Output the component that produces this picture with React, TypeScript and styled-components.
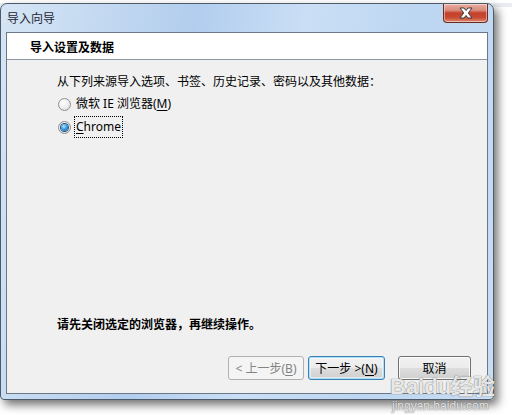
import React from "react";
import styled, { createGlobalStyle } from "styled-components";

const Global = createGlobalStyle`
  html, body { margin: 0; padding: 0; background: #ffffff; }
  body { width: 512px; height: 415px; overflow: hidden; position: relative;
    font-family: "Noto Sans", "Noto Sans CJK SC", sans-serif; }
  #root { width: 512px; height: 415px; }
`;

const Page = styled.div`
  width: 512px;
  height: 415px;
  position: relative;
  background: linear-gradient(#e9edf1 0, #e9edf1 4px, #ffffff 4px);
`;

const Window = styled.div`
  margin-top: 3px;
  width: 494px;
  height: 397px;
  box-sizing: border-box;
  border: 1px solid #4d5a69;
  border-radius: 7px 7px 4px 4px;
  background: linear-gradient(100deg, #d5e5f6 0%, #c2d8f0 20%, #b2cdee 35%, #cadff5 55%, #bdd6f1 75%, #c9ddf3 100%);
  box-shadow: 4px 5px 10px rgba(0, 0, 0, 0.55);
  display: flex;
  flex-direction: column;
  padding: 0 5px 5px 5px;
`;

const TitleBar = styled.div`
  height: 28px;
  display: flex;
  align-items: flex-start;
  justify-content: space-between;
`;

const Title = styled.div`
  margin-top: 6px;
  margin-left: 1px;
  font-size: 12px;
  line-height: 16px;
  color: #1e2633;
  font-family: "Noto Sans CJK SC", sans-serif;
`;

const CloseButton = styled.div`
  width: 45px;
  height: 19px;
  box-sizing: border-box;
  margin-right: 0px;
  border: 1px solid #6b2a22;
  border-top: none;
  border-radius: 0 0 4px 4px;
  background: linear-gradient(#e9aea3 0%, #d98b7c 35%, #c4402b 50%, #c84a33 75%, #dd8a6f 100%);
  box-shadow: inset 0 0 0 1px rgba(255, 255, 255, 0.45);
  display: flex;
  align-items: center;
  justify-content: center;
`;

const Client = styled.div`
  flex: 1;
  display: flex;
  flex-direction: column;
  border: 1px solid #6b7888;
  background: #f0f0f0;
`;

const Header = styled.div`
  height: 26px;
  background: #ffffff;
  border-bottom: 1px solid #8a96a4;
  display: flex;
  align-items: center;
  padding-left: 23px;
  font-family: "Noto Sans CJK SC", sans-serif;
  font-weight: 700;
  font-size: 12px;
  color: #000;
`;

const Body = styled.div`
  flex: 1;
  display: flex;
  flex-direction: column;
  padding: 13px 16px 13px 50px;
`;

const Text = styled.div<{ $bold?: boolean }>`
  font-family: "Noto Sans CJK SC", sans-serif;
  font-size: 12px;
  line-height: 16px;
  font-weight: ${(p) => (p.$bold ? 700 : 400)};
  color: #000;
`;

const Options = styled.div`
  margin-top: 4px;
  display: flex;
  flex-direction: column;
  gap: 1px;
`;

const RadioRow = styled.div`
  height: 22px;
  display: flex;
  align-items: center;
  gap: 3px;
  padding-left: 1px;
`;

const RadioCircle = styled.span<{ $checked?: boolean }>`
  width: 13px;
  height: 13px;
  box-sizing: border-box;
  border-radius: 50%;
  border: 1px solid #8f8f8f;
  background: radial-gradient(circle at 40% 35%, #ffffff 0%, #f0f0f0 45%, #d4d4d4 100%);
  display: flex;
  align-items: center;
  justify-content: center;
  &::after {
    content: "";
    display: ${(p) => (p.$checked ? "block" : "none")};
    width: 7px;
    height: 7px;
    border-radius: 50%;
    background: radial-gradient(circle at 40% 35%, #b8e4fb 0%, #3a9be0 45%, #1d5c9d 100%);
    box-shadow: 0 0 0 1px #244f7a;
  }
`;

const RadioLabel = styled.span<{ $focused?: boolean }>`
  font-family: "Segoe UI", "Noto Sans", "Noto Sans CJK SC", sans-serif;
  font-size: 12px;
  line-height: 16px;
  color: #000;
  padding: 2px 1px;
  border: 1px dotted ${(p) => (p.$focused ? "#000" : "transparent")};
  u { text-decoration: underline; text-underline-offset: 2px; }
`;

const Warning = styled(Text)`
  margin-top: auto;
  margin-left: 0;
`;

const ButtonRow = styled.div`
  margin-top: 24px;
  display: flex;
  justify-content: flex-end;
  align-items: center;
`;

const Button = styled.div<{ $variant?: "disabled" | "default" | "normal"; $w: number; $gap?: number }>`
  width: ${(p) => p.$w}px;
  height: 24px;
  margin-left: ${(p) => p.$gap ?? 0}px;
  box-sizing: border-box;
  border-radius: 3px;
  display: flex;
  align-items: center;
  justify-content: center;
  font-family: "Segoe UI", "Noto Sans", "Noto Sans CJK SC", sans-serif;
  font-size: 12px;
  border: 1px solid ${(p) => (p.$variant === "disabled" ? "#adb2b5" : p.$variant === "default" ? "#3c7fb1" : "#707070")};
  color: ${(p) => (p.$variant === "disabled" ? "#838383" : "#000")};
  background: ${(p) =>
    p.$variant === "disabled"
      ? "#f4f4f4"
      : "linear-gradient(#f2f2f2 0%, #ebebeb 50%, #dddddd 51%, #cfcfcf 100%)"};
  box-shadow: ${(p) =>
    p.$variant === "default"
      ? "inset 0 0 0 1px #a8e3fc, inset 0 0 0 2px rgba(255,255,255,0.5)"
      : p.$variant === "normal"
      ? "inset 0 0 0 1px rgba(255,255,255,0.8)"
      : "none"};
  u { text-decoration: underline; text-underline-offset: 2px; }
`;

const Watermark = styled.div`
  position: absolute;
  left: 390px;
  top: 372px;
  display: flex;
  flex-direction: column;
  align-items: flex-start;
  color: rgba(255, 255, 255, 0.85);
  text-shadow: 0 0 1px rgba(90, 90, 90, 0.7), 0 0 1px rgba(90, 90, 90, 0.7);
  pointer-events: none;
`;

const WmBig = styled.div`
  font-family: "Liberation Sans", "Noto Sans CJK SC", sans-serif;
  font-size: 22px;
  font-weight: 700;
  line-height: 24px;
  letter-spacing: 0px;
`;

const WmSmall = styled.div`
  font-family: "Liberation Sans", sans-serif;
  font-size: 12px;
  line-height: 14px;
  margin-left: 2px;
`;

export default function App() {
  return (
    <Page>
      <Global />
      <Window>
        <TitleBar>
          <Title>导入向导</Title>
          <CloseButton>
            <svg width="16" height="12" viewBox="0 0 16 12">
              <path
                d="M2 1 L6 1 L8 3.5 L10 1 L14 1 L10.3 6 L14 11 L10 11 L8 8.5 L6 11 L2 11 L5.7 6 Z"
                fill="#ffffff"
                stroke="#3b3b3b"
                strokeWidth="1"
                strokeLinejoin="round"
              />
            </svg>
          </CloseButton>
        </TitleBar>
        <Client>
          <Header>导入设置及数据</Header>
          <Body>
            <Text>从下列来源导入选项、书签、历史记录、密码以及其他数据：</Text>
            <Options>
              <RadioRow>
                <RadioCircle />
                <RadioLabel>
                  微软 IE 浏览器(<u>M</u>)
                </RadioLabel>
              </RadioRow>
              <RadioRow>
                <RadioCircle $checked />
                <RadioLabel $focused>
                  <u>C</u>hrome
                </RadioLabel>
              </RadioRow>
            </Options>
            <Warning $bold>请先关闭选定的浏览器，再继续操作。</Warning>
            <ButtonRow>
              <Button $variant="disabled" $w={76}>
                &lt; 上一步(<u>B</u>)
              </Button>
              <Button $variant="default" $w={77} $gap={4}>
                下一步 &gt;(<u>N</u>)
              </Button>
              <Button $variant="normal" $w={73} $gap={13}>
                取消
              </Button>
            </ButtonRow>
          </Body>
        </Client>
      </Window>
      <Watermark>
        <WmBig>Baidu经验</WmBig>
        <WmSmall>jingyan.baidu.com</WmSmall>
      </Watermark>
    </Page>
  );
}
